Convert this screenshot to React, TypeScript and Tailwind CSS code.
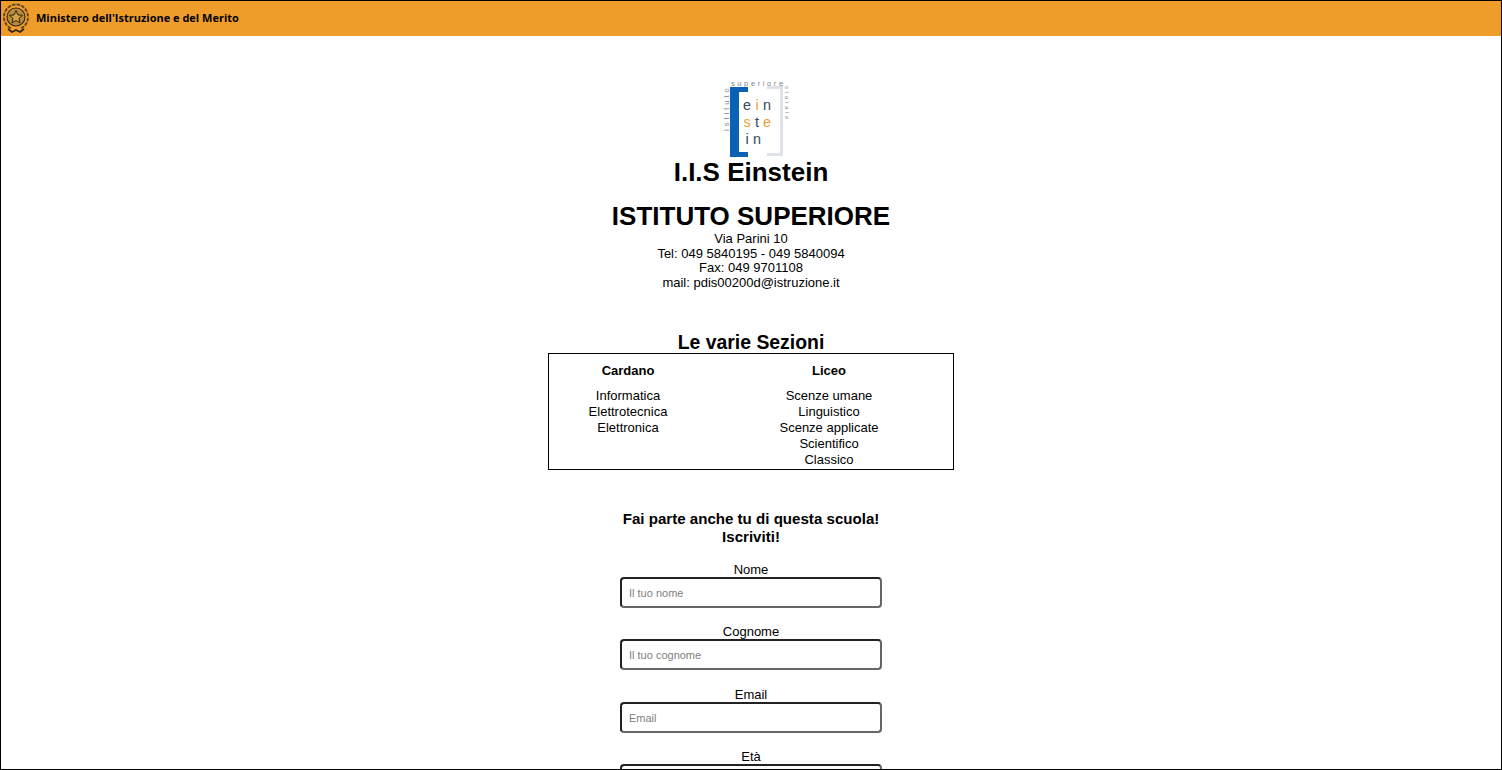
import React from "react";

function Emblem() {
  const leaves = [0, 1, 2, 3, 4, 5, 6, 7, 8, 9, 10, 11, 12, 13, 14, 15];
  return (
    <svg width="30" height="33" viewBox="0 0 30 33" className="shrink-0">
      <circle cx="15" cy="15" r="9" fill="#b98a3a" stroke="#3a2c12" strokeWidth="1.2" />
      <g fill="#4a3a1a">
        {leaves.map((i) => {
          const a = (i / 16) * Math.PI * 2 + 0.2;
          if (a > 1.2 && a < 1.95) return null;
          const x = 15 + Math.cos(a) * 12;
          const y = 15 + Math.sin(a) * 12.5;
          return <ellipse key={i} cx={x} cy={y} rx="1.1" ry="2.1" transform={`rotate(${(a * 180) / Math.PI} ${x} ${y})`} opacity="0.85" />;
        })}
      </g>
      <path d="M15 8.5l1.9 4.4 4.7.4-3.6 3.1 1.1 4.6-4.1-2.4-4.1 2.4 1.1-4.6-3.6-3.1 4.7-.4z" fill="#d3a24a" stroke="#2e2410" strokeWidth="1" />
      <path d="M7 27l4 3 4-2 4 2 4-3" fill="none" stroke="#2e2410" strokeWidth="1.6" />
    </svg>
  );
}

function SchoolLogo() {
  return (
    <svg width="80" height="78" viewBox="0 0 80 78" className="block">
      <text x="20" y="5.5" fontSize="7.5" letterSpacing="2.6" fill="#7b8791" fontFamily="'Liberation Sans', sans-serif">superiore</text>
      <text x="0" y="0" transform="translate(18 51) rotate(-90)" fontSize="7.5" letterSpacing="3" fill="#7b8791" fontFamily="'Liberation Sans', sans-serif">istituto</text>
      <text x="0" y="0" transform="translate(74 6) rotate(90)" fontSize="6" letterSpacing="2.6" fill="#8b969e" fontFamily="'Liberation Sans', sans-serif">statale</text>
      <path d="M19 7h18v5h-9v60h9v5H19z" fill="#0b62b5" />
      <path d="M56 6h16v70H56v-3h13V9H56z" fill="#dfe3e7" />
      <g fontSize="14.4" fontFamily="'Liberation Sans', sans-serif" textAnchor="middle">
        <text x="36" y="30" fill="#33495c">e</text>
        <text x="46" y="30" fill="#f0a030">i</text>
        <text x="56" y="30" fill="#33495c">n</text>
        <text x="36" y="47" fill="#f0a030">s</text>
        <text x="46" y="47" fill="#33495c">t</text>
        <text x="56" y="47" fill="#f0a030">e</text>
        <text x="36" y="63.5" fill="#33495c">i</text>
        <text x="46" y="63.5" fill="#33495c">n</text>
      </g>
    </svg>
  );
}

function Field({ label, placeholder, spaced = true }: { label: string; placeholder: string; spaced?: boolean }) {
  return (
    <div className={`flex flex-col items-center ${spaced ? "mb-[16.5px]" : ""}`}>
      <label className="text-[13px] leading-[15px] text-black">{label}</label>
      <input
        placeholder={placeholder}
        className="block h-[31px] w-[262px] rounded-[4px] border-2 border-solid border-t-[#222222] border-l-[#222222] border-r-[#666666] border-b-[#666666] bg-white px-[7px] pt-[1px] text-[11px] outline-none placeholder:text-[#808080]"
      />
    </div>
  );
}

export default function App() {
  return (
    <div className="h-[770px] overflow-hidden border border-black bg-white text-center text-black font-['Liberation_Sans',Arial,sans-serif]">
      <header className="flex h-[35px] items-center bg-[#ef9d2a]">
        <Emblem />
        <span className="ml-[5px] font-['Open_Sans',sans-serif] text-[11px] font-bold text-black">Ministero dell'Istruzione e del Merito</span>
      </header>

      <main className="flex flex-col items-center">
        <div className="mt-[44px]">
          <SchoolLogo />
        </div>
        <h1 className="-mt-[1px] text-[26px] font-bold leading-[30px]">I.I.S Einstein</h1>
        <h2 className="mt-[14px] text-[26px] font-bold leading-[30px]">ISTITUTO SUPERIORE</h2>
        <address className="pt-[1px] text-[13px] not-italic leading-[14.67px]">
          Via Parini 10<br />
          Tel: 049 5840195 - 049 5840094<br />
          Fax: 049 9701108<br />
          mail: pdis00200d@istruzione.it
        </address>

        <h3 className="mt-[40px] text-[19.4px] font-bold leading-[23px]">Le varie Sezioni</h3>
        <div className="mt-[-1px] grid h-[117px] w-[406px] grid-cols-[158px_244px] border border-black text-[13px] leading-[16px]">
          <div className="pt-[9px]">
            <div className="mb-[9px] font-bold">Cardano</div>
            <div>Informatica</div>
            <div>Elettrotecnica</div>
            <div>Elettronica</div>
          </div>
          <div className="pt-[9px]">
            <div className="mb-[9px] font-bold">Liceo</div>
            <div>Scenze umane</div>
            <div>Linguistico</div>
            <div>Scenze applicate</div>
            <div>Scientifico</div>
            <div>Classico</div>
          </div>
        </div>

        <p className="mb-[16px] mt-[40px] text-[15.1px] font-bold leading-[18px]">
          Fai parte anche tu di questa scuola!<br />Iscriviti!
        </p>
        <Field label="Nome" placeholder="Il tuo nome" />
        <Field label="Cognome" placeholder="Il tuo cognome" />
        <Field label="Email" placeholder="Email" />
        <Field label="Età" placeholder="La tua età" spaced={false} />
      </main>
    </div>
  );
}
